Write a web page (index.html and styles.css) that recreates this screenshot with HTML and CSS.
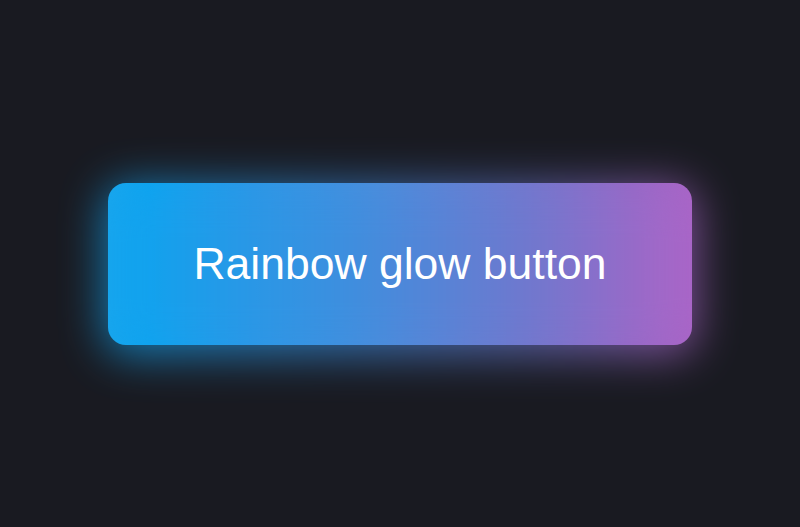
FILE: index.html
```html
<!DOCTYPE html>
<html lang="en">
<head>
  <meta charset="UTF-8">
  <meta name="viewport" content="width=device-width, initial-scale=1.0">
  <title>Rainbow glow button</title>
  <link rel="stylesheet" href="styles.css">
</head>
<body>
  <main class="stage">
    <button class="glow-button">Rainbow glow button</button>
  </main>
</body>
</html>
```

FILE: styles.css
```css
/* dark backdrop, button centred in the window */
html, body {
  height: 100%;
}

body {
  margin: 0;
  background-color: #191a21;
  font-family: 'Liberation Sans', Arial, sans-serif;
}

.stage {
  height: 100%;
  display: flex;
  align-items: center;
  justify-content: center;
}

.glow-button {
  position: relative;
  isolation: isolate;
  width: 584px;
  height: 162px;
  padding: 0;
  border: none;
  border-radius: 18px;
  font-family: inherit;
  font-size: 44.5px;
  color: #ffffff;
  cursor: pointer;
  background: linear-gradient(90deg, #1aa6ec 0%, #0aa5f0 7%, #2d97e6 25%, #4b8fdc 45%, #6780d2 62%, #7a74ca 75%, #9667c4 90%, #a864c6 100%);
}

/* soft coloured halo behind the button */
.glow-button::before {
  content: "";
  position: absolute;
  inset: -4px;
  z-index: -1;
  border-radius: 24px;
  background: linear-gradient(90deg, #0ea5f0, #3a8fe0 40%, #6a7ad0 70%, #b065c8);
  filter: blur(22px);
  opacity: 0.7;
  transform: translateY(6px);
}
```
